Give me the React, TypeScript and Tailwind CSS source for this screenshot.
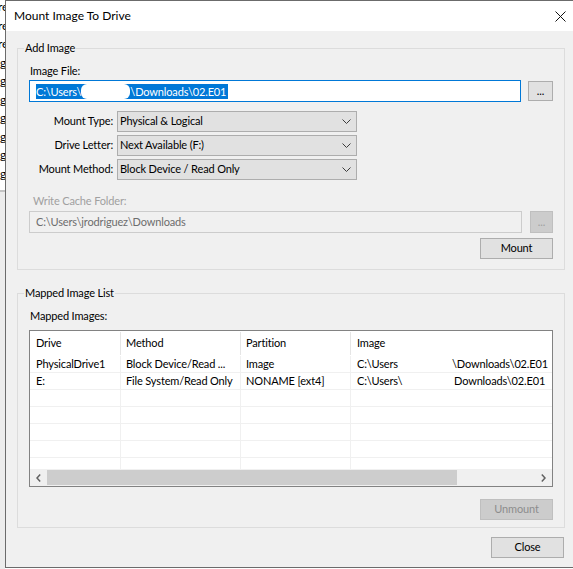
const behindLines = ["re", "re", "re", "g", "g", "g", "g", "g", "g", "g"];

const listRows = [
  { drive: "PhysicalDrive1", method: "Block Device/Read ...", partition: "Image", user: "C:\\Users", userW: "w-[95px]", rest: "\\Downloads\\02.E01" },
  { drive: "E:", method: "File System/Read Only", partition: "NONAME [ext4]", user: "C:\\Users\\", userW: "w-[97px]", rest: "Downloads\\02.E01" },
];

const Chevron = () => (
  <svg width="9" height="5" viewBox="0 0 9 5" className="shrink-0">
    <path d="M0.5 0.5 L4.5 4.5 L8.5 0.5" fill="none" stroke="#3c3c3c" strokeWidth="1" />
  </svg>
);

const Combo = ({ label, value }: { label: string; value: string }) => (
  <div className="flex h-[21px] items-center gap-[4px]">
    <span className="w-[84px] text-right">{label}</span>
    <div className="flex h-[21px] w-[240px] items-center justify-between border border-[#adadad] bg-[#e1e1e1] pl-[2px] pr-[5px]">
      <span>{value}</span>
      <Chevron />
    </div>
  </div>
);

export default function App() {
  return (
    <div className="flex h-[569px] w-[573px] overflow-hidden bg-white font-['Lato','Liberation_Sans',sans-serif] text-[11px] tracking-[-0.15px] text-black">
      {/* window behind the dialog, mostly covered */}
      <div className="flex w-[5px] shrink-0 flex-col overflow-hidden">
        <div className="h-[190px] bg-white text-[12px] leading-[18.5px]">
          <div className="-mt-[2px]">
            {behindLines.map((t, i) => (
              <div key={i} className={`whitespace-nowrap ${t === "re" ? "-ml-[2px]" : ""}`}>{t}</div>
            ))}
          </div>
        </div>
        <div className="flex-1 border-t-2 border-[#c4c4c4] bg-[#ececec]" />
      </div>

      {/* dialog */}
      <div className="flex h-[568px] flex-1 flex-col border-b border-l border-t border-[#6b6b6b] bg-[#f0f0f0]">
        <div className="flex h-[30px] shrink-0 items-center justify-between bg-white pl-[8px] pr-[7px] text-[12px] tracking-normal">
          <span>Mount Image To Drive</span>
          <svg width="11" height="11" viewBox="0 0 11 11">
            <path d="M0.5 0.5 L10.5 10.5 M10.5 0.5 L0.5 10.5" stroke="#111" strokeWidth="1" />
          </svg>
        </div>

        <div className="flex flex-1 flex-col pl-[11px] pr-[8px]">
          {/* Add Image */}
          <fieldset className="mt-[10px] border border-[#dcdcdc]">
            <legend className="ml-[6px] px-[1px] leading-[14px]">Add Image</legend>
            <div className="flex flex-col px-[11px] pb-[10px] pt-[9px]">
              <span className="h-[14px] pl-[1px] leading-[14px]">Image File:</span>
              <div className="mt-[2px] flex items-center gap-[7px]">
                <div className="flex h-[22px] flex-1 items-center border border-[#0078d7] bg-white pl-[6px]">
                  <span className="flex h-[15px] items-center bg-[#0078d7] pr-[2px] leading-[15px] text-white">
                    <span>{"C:\\Users\\"}</span>
                    <span className="h-[15px] w-[49px] rounded-[6px] bg-white" />
                    <span>{"\\Downloads\\02.E01"}</span>
                  </span>
                </div>
                <button className="h-[20px] w-[25px] border border-[#adadad] bg-[#e1e1e1] leading-[14px]">...</button>
              </div>

              <div className="mt-[9px] flex flex-col gap-[3px]">
                <Combo label="Mount Type:" value="Physical & Logical" />
                <Combo label="Drive Letter:" value="Next Available (F:)" />
                <Combo label="Mount Method:" value="Block Device / Read Only" />
              </div>

              <span className="mt-[14px] h-[14px] pl-[4px] leading-[14px] text-[#a0a0a0]">Write Cache Folder:</span>
              <div className="mt-[3px] flex h-[22px] gap-[8px]">
                <div className="flex flex-1 items-center border border-[#cccccc] bg-[#f0f0f0] pl-[6px] text-[#6d6d6d]">
                  {"C:\\Users\\jrodriguez\\Downloads"}
                </div>
                <button className="w-[23px] border border-[#bfbfbf] bg-[#cccccc] text-[#a0a0a0]">...</button>
              </div>
              <button className="mt-[5px] h-[21px] w-[73px] self-end border border-[#adadad] bg-[#e1e1e1]">Mount</button>
            </div>
          </fieldset>

          {/* Mapped Image List */}
          <fieldset className="mt-[16px] border border-[#dcdcdc]">
            <legend className="ml-[6px] px-[1px] leading-[14px]">Mapped Image List</legend>
            <div className="flex flex-col px-[11px] pb-[7px] pt-[9px]">
              <span className="h-[14px] pl-[1px] leading-[14px]">Mapped Images:</span>
              <div className="mt-[7px] flex h-[157px] flex-col border border-[#828282] bg-white">
                <div className="flex h-[25px] shrink-0 items-center">
                  <div className="flex h-[23px] w-[91px] items-center border-r border-[#e5e5e5] pl-[6px]">Drive</div>
                  <div className="flex h-[23px] w-[120px] items-center border-r border-[#e5e5e5] pl-[5px]">Method</div>
                  <div className="flex h-[23px] w-[110px] items-center border-r border-[#e5e5e5] pl-[5px]">Partition</div>
                  <div className="flex h-[23px] flex-1 items-center pl-[6px]">Image</div>
                </div>
                <div className="flex h-[113px] flex-col overflow-hidden">
                  {Array.from({ length: 7 }).map((_, i) => {
                    const r = listRows[i];
                    return (
                      <div key={i} className="flex h-[17px] shrink-0 border-b border-[#f0f0f0] leading-[16px]">
                        <div className="w-[91px] border-r border-[#f0f0f0] pl-[6px]">{r?.drive}</div>
                        <div className="w-[120px] whitespace-nowrap border-r border-[#f0f0f0] pl-[5px]">{r?.method}</div>
                        <div className="w-[110px] whitespace-nowrap border-r border-[#f0f0f0] pl-[5px]">{r?.partition}</div>
                        <div className="flex flex-1 overflow-hidden whitespace-nowrap pl-[6px]">
                          {r && (
                            <>
                              <span className={`inline-block shrink-0 ${r.userW}`}>{r.user}</span>
                              <span>{r.rest}</span>
                            </>
                          )}
                        </div>
                      </div>
                    );
                  })}
                </div>
                <div className="flex h-[17px] shrink-0 items-center bg-[#f0f0f0]">
                  <div className="flex w-[17px] justify-center">
                    <svg width="5" height="8" viewBox="0 0 5 8">
                      <path d="M4.2 0.6 L1 4 L4.2 7.4" fill="none" stroke="#606060" strokeWidth="1.5" />
                    </svg>
                  </div>
                  <div className="h-[15px] w-[410px] bg-[#cdcdcd]" />
                  <div className="flex-1" />
                  <div className="flex w-[17px] justify-center">
                    <svg width="5" height="8" viewBox="0 0 5 8">
                      <path d="M0.8 0.6 L4 4 L0.8 7.4" fill="none" stroke="#606060" strokeWidth="1.5" />
                    </svg>
                  </div>
                </div>
              </div>
              <button className="mt-[12px] h-[21px] w-[73px] self-end border border-[#bfbfbf] bg-[#cccccc] text-[#8c8c8c]">Unmount</button>
            </div>
          </fieldset>

          <button className="mr-[1px] mt-[9px] h-[21px] w-[73px] self-end border border-[#adadad] bg-[#e1e1e1]">Close</button>
        </div>
      </div>
    </div>
  );
}
